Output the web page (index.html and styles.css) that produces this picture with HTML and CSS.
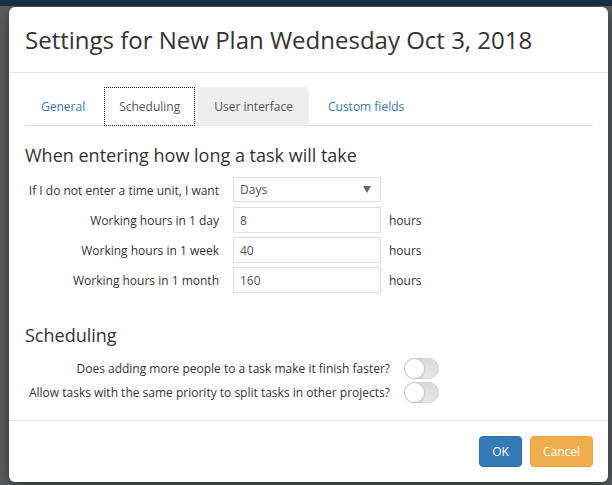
FILE: index.html
```html
<!DOCTYPE html>
<html>
<head>
<meta charset="utf-8">
<link rel="stylesheet" href="styles.css">
</head>
<body>
<div class="topbar"></div>
<div class="modal">
  <div class="modal-header">
    <h1 class="modal-title">Settings for New Plan Wednesday Oct 3, 2018</h1>
  </div>
  <div class="modal-body">
    <ul class="tabs">
      <li class="tab">General</li>
      <li class="tab active">Scheduling</li>
      <li class="tab hover">User interface</li>
      <li class="tab">Custom fields</li>
    </ul>
    <h2 class="section-title first">When entering how long a task will take</h2>
    <div class="form-grid">
      <label class="label">If I do not enter a time unit, I want</label>
      <div class="select"><span>Days</span><span class="caret"></span></div>
      <span></span>
      <label class="label">Working hours in 1 day</label>
      <div class="input">8</div>
      <span class="unit">hours</span>
      <label class="label">Working hours in 1 week</label>
      <div class="input">40</div>
      <span class="unit">hours</span>
      <label class="label">Working hours in 1 month</label>
      <div class="input">160</div>
      <span class="unit">hours</span>
    </div>
    <h2 class="section-title second">Scheduling</h2>
    <div class="toggle-grid">
      <label class="label">Does adding more people to a task make it finish faster?</label>
      <div class="toggle"><span class="knob"></span></div>
      <label class="label">Allow tasks with the same priority to split tasks in other projects?</label>
      <div class="toggle"><span class="knob"></span></div>
    </div>
  </div>
  <div class="modal-footer">
    <button class="btn btn-primary">OK</button>
    <button class="btn btn-warning">Cancel</button>
  </div>
</div>
</body>
</html>
```

FILE: styles.css
```css
* { box-sizing: border-box; }
html, body {
  margin: 0;
  padding: 0;
  height: 100%;
}
body {
  background: #5c5f62;
  font-family: "Open Sans", "Liberation Sans", sans-serif;
  color: #333;
  overflow: hidden;
}
.topbar {
  height: 6px;
  background: #1c3145;
  margin-bottom: 1px;
}
.modal {
  margin-left: 9px;
  width: 599px;
  background: #fff;
  border-radius: 6px;
  box-shadow: 0 5px 15px rgba(0,0,0,0.5);
}
.modal-header {
  padding: 15px 16px;
  border-bottom: 1px solid #e5e5e5;
}
.modal-title {
  margin: 0;
  font-size: 24px;
  line-height: 35px;
  font-weight: 400;
  color: #333;
}
.modal-body {
  padding: 14px 15px 17px 16px;
}
.tabs {
  list-style: none;
  margin: 0;
  padding: 0;
  display: flex;
  border-bottom: 1px solid #ddd;
  height: 39px;
}
.tab {
  font-size: 12px;
  line-height: 18px;
  padding: 10px 15px;
  margin-right: 3px;
  margin-bottom: -1px;
  color: #337ab7;
  border: 1px solid transparent;
  border-radius: 4px 4px 0 0;
}
.tab.active {
  color: #555;
  background: #fff;
  border: 1px dotted #222;
  border-radius: 0;
  padding: 10px 14px;
}
.tab.hover {
  background: #eee;
  border-color: #eee;
  color: #555;
  padding: 10px 15px;
}
.section-title {
  font-size: 18px;
  line-height: 20px;
  font-weight: 400;
  margin: 0;
  color: #333;
}
.section-title.first { margin-top: 19px; }
.section-title.second { margin-top: 32px; }
.form-grid {
  margin-top: 12px;
  display: grid;
  grid-template-columns: 194px 148px auto;
  column-gap: 14px;
  row-gap: 4px;
  align-items: center;
}
.form-grid .unit { margin-left: -6px; }
.label {
  font-size: 12px;
  text-align: right;
  color: #333;
  line-height: 17px;
}
.select, .input {
  height: 26px;
  border: 1px solid #ddd;
  font-size: 12px;
  color: #555;
  padding: 0 6px;
  display: flex;
  align-items: center;
}
.select { justify-content: space-between; height: 25px; margin-bottom: 1px; }
.caret {
  width: 0;
  height: 0;
  border-left: 4px solid transparent;
  border-right: 4px solid transparent;
  border-top: 7px solid #666;
  margin-right: 3px;
}
.unit {
  font-size: 12px;
  color: #333;
}
.toggle-grid {
  margin-top: 13px;
  display: grid;
  grid-template-columns: 365px 35px;
  column-gap: 14px;
  row-gap: 3px;
  align-items: center;
}
.toggle {
  width: 35px;
  height: 21px;
  border-radius: 11px;
  background: linear-gradient(#d9d9d9, #e8e8e8);
  border: 1px solid #d3d3d3;
  position: relative;
}
.knob {
  position: absolute;
  left: 0;
  top: 0;
  width: 19px;
  height: 19px;
  border-radius: 50%;
  background: #fff;
  box-shadow: 0 0 0 1px #ccc, 1px 1px 2px rgba(0,0,0,0.15);
}
.modal-footer {
  border-top: 1px solid #e5e5e5;
  padding: 15px 15px 15px 16px;
  display: flex;
  justify-content: flex-end;
  gap: 8px;
}
.btn {
  font-family: inherit;
  font-size: 12px;
  line-height: 17px;
  padding: 6px 12px;
  height: 31px;
  border-radius: 4px;
  border: 1px solid transparent;
  color: #fff;
}
.btn-primary {
  background: #337ab7;
  border-color: #2e6da4;
  width: 43px;
}
.btn-warning {
  background: #f0ad4e;
  border-color: #eea236;
  width: 63px;
}
```
